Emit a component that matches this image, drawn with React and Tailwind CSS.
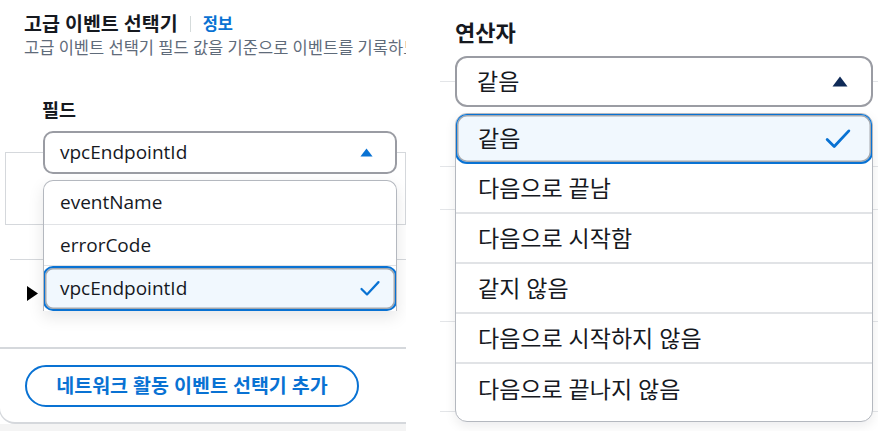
import React from "react";

const font = { fontFamily: '"Open Sans","Noto Sans CJK KR",sans-serif' };

function Check({ className }) {
  return (
    <svg className={className} viewBox="0 0 24 20" fill="none">
      <path d="M2 10.5 L8.5 17 L22 2.5" stroke="#0972d3" strokeWidth="2.6" strokeLinecap="round" strokeLinejoin="round" />
    </svg>
  );
}

function Caret({ className, color }) {
  return (
    <svg className={className} viewBox="0 0 16 11">
      <path d="M8 0.5 L15.5 10.5 L0.5 10.5 Z" fill={color} />
    </svg>
  );
}

function FieldPanel() {
  const options = ["eventName", "errorCode"];
  return (
    <div className="relative h-full w-[406px] shrink-0 overflow-hidden bg-white">
      <div className="pl-6 pt-3">
        <div className="flex items-center leading-6">
          <h2 className="text-[19.5px] font-bold text-[#16191f]">고급 이벤트 선택기</h2>
          <span className="mx-3 h-4 w-px bg-[#d5dbdb]" />
          <a className="text-[16.5px] font-bold text-[#0972d3]">정보</a>
        </div>
        <p className="mt-[2px] w-[382px] overflow-hidden whitespace-nowrap text-[16.5px] leading-5 text-[#5f6b7a]">
          고급 이벤트 선택기 필드 값을 기준으로 이벤트를 기록하도록
        </p>
      </div>

      <div className="ml-[42px] mt-10 text-[18.5px] font-bold leading-6 text-[#16191f]">필드</div>
      <div className="relative z-10 ml-[43px] mt-[9px] flex h-[43px] w-[354px] items-center justify-between rounded-[10px] border-2 border-[#9a9ca3] bg-white pl-[15px] pr-[22px] text-[19px] text-[#16191f]">
        <span>vpcEndpointId</span>
        <Caret className="h-[9px] w-[13px]" color="#0972d3" />
      </div>

      <div className="-mt-[22px] ml-[5px] h-[73px] w-[401px] border border-[#d5d8dc]" />
      <div className="ml-[10px] mt-[34px] border-t border-[#d5d8dc]" />
      <div className="-ml-px flex flex-col rounded-bl-[16px] border-b-2 border-l border-[#d5d8dc]">
        <div className="ml-[27px] mt-[26px] h-[15px]">
          <svg className="h-[15px] w-[11px]" viewBox="0 0 11 15">
            <path d="M0 0 L11 7.5 L0 15 Z" fill="#000" />
          </svg>
        </div>
        <div className="mt-[46px] border-t-2 border-[#d5d8dc]" />
        <button className="ml-[25px] mt-[16px] flex h-[42px] w-[334px] items-center justify-center rounded-full border-2 border-[#0972d3] text-[19.5px] font-bold text-[#0972d3]">
          네트워크 활동 이벤트 선택기 추가
        </button>
        <div className="h-[15px]" />
      </div>
      <div className="h-10 bg-[#f4f4f4]" />

      <ul className="absolute left-[43px] top-[180px] w-[354px] overflow-hidden rounded-t-[10px] border-x border-t border-[#b4b8bf] bg-white text-[19px] text-[#16191f] shadow-[0_6px_16px_rgba(0,7,22,0.10)]">
        {options.map((o, i) => (
          <li key={o} className={`flex items-center pl-[16px] ${i === 0 ? "h-[44px]" : "h-[41px]"} border-b border-[#e1e3e6]`}>
            {o}
          </li>
        ))}
        <li className="-mx-px flex h-[45px] items-center justify-between rounded-[10px] border-2 border-[#0972d3] bg-[#f1f8fe] pl-[15px] pr-[14px] shadow-[inset_0_0_0_1.5px_#a4a8ae]">
          <span>vpcEndpointId</span>
          <Check className="h-[17px] w-[22px]" />
        </li>
      </ul>
    </div>
  );
}

function OperatorPanel() {
  const options = ["다음으로 끝남", "다음으로 시작함", "같지 않음", "다음으로 시작하지 않음", "다음으로 끝나지 않음"];
  return (
    <div className="relative h-full flex-1 overflow-hidden bg-white">
      {/* form rows behind the open menu */}
      <div className="flex flex-col">
        <div className="h-[82px] border-b border-[#e3e5e8]" />
        <div className="h-[85px] border-b border-[#e3e5e8]" />
        <div className="h-[43px] border-b border-[#e3e5e8]" />
        <div className="h-[112px] border-b border-[#e3e5e8]" />
        <div className="h-[90px] border-b border-[#e3e5e8]" />
      </div>

      <div className="absolute left-[15px] top-0 w-[418px]">
        <div className="mt-[16px] text-[22px] font-bold leading-8 text-[#16191f]">연산자</div>
        <div className="mt-[8px] flex h-[51px] items-center justify-between rounded-[12px] border-2 border-[#9a9ca3] bg-white pl-[20px] pr-[23px] text-[23px] text-[#16191f]">
          <span>같음</span>
          <Caret className="h-[11px] w-[16px]" color="#0f2a57" />
        </div>
        <ul className="mt-[6px] overflow-hidden rounded-[12px] border border-[#b4b8bf] bg-white pb-[7px] text-[23px] text-[#16191f] shadow-[0_4px_12px_rgba(0,7,22,0.08)]">
          <li className="-mx-px -mt-px flex h-[51px] items-center justify-between rounded-[12px] border-2 border-[#0972d3] bg-[#f1f8fe] pl-[21px] pr-[20px] shadow-[inset_0_0_0_1.5px_#a4a8ae]">
            <span>같음</span>
            <Check className="h-[22px] w-[26px]" />
          </li>
          {options.map((o, i) => (
            <li
              key={o}
              className={`flex h-[50px] items-center pl-[22px] ${i < options.length - 1 ? "border-b-2 border-[#e1e3e6]" : ""}`}
            >
              {o}
            </li>
          ))}
        </ul>
      </div>
    </div>
  );
}

export default function App() {
  return (
    <div className="flex h-[431px] w-[878px] overflow-hidden bg-white" style={font}>
      <FieldPanel />
      <div className="w-[34px] shrink-0 bg-white" />
      <OperatorPanel />
    </div>
  );
}
